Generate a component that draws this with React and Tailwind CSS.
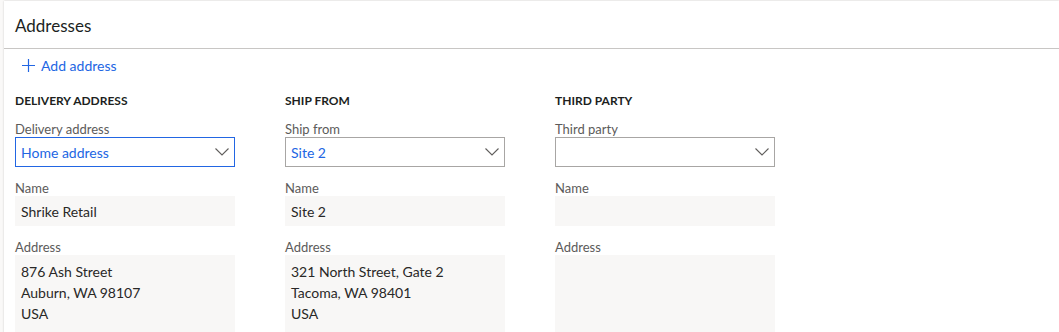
import React from 'react';

const Chevron = () => (
  <svg width="14" height="8" viewBox="0 0 14 8" fill="none" className="shrink-0">
    <path d="M0.5 0.5L7 7L13.5 0.5" stroke="#605e5c" strokeWidth="1.1" />
  </svg>
);

const Plus = () => (
  <svg width="13" height="13" viewBox="0 0 13 13" fill="none" className="shrink-0">
    <path d="M6.5 0V13M0 6.5H13" stroke="#2266e3" strokeWidth="1.2" />
  </svg>
);

const columns = [
  {
    heading: 'DELIVERY ADDRESS',
    selectLabel: 'Delivery address',
    selectValue: 'Home address',
    focused: true,
    name: 'Shrike Retail',
    address: ['876 Ash Street', 'Auburn, WA 98107', 'USA'],
  },
  {
    heading: 'SHIP FROM',
    selectLabel: 'Ship from',
    selectValue: 'Site 2',
    focused: false,
    name: 'Site 2',
    address: ['321 North Street, Gate 2', 'Tacoma, WA 98401', 'USA'],
  },
  {
    heading: 'THIRD PARTY',
    selectLabel: 'Third party',
    selectValue: '',
    focused: false,
    name: '',
    address: [],
  },
];

const Label = ({ children }) => (
  <div className="h-[16px] text-[13px] leading-[16px] text-[#5c5b5a]">{children}</div>
);

const AddressColumn = ({ col }) => (
  <div className="w-[270px] shrink-0">
    <div className="h-[16px] text-[12px] leading-[16px] font-bold text-[#201f1e]">{col.heading}</div>

    <div className="mt-[12px]">
      <Label>{col.selectLabel}</Label>
      <div
        className={`flex items-center justify-between w-[220px] h-[30px] pl-[5px] pr-[5px] bg-white border ${
          col.focused ? 'border-[#2266e3]' : 'border-[#a8a6a4]'
        }`}
      >
        <span className="text-[14px] text-[#2266e3]">{col.selectValue}</span>
        <Chevron />
      </div>
    </div>

    <div className="mt-[13px]">
      <Label>Name</Label>
      <div className="flex items-center w-[220px] h-[30px] px-[6px] bg-[#f8f7f6] text-[14px] text-[#292827]">
        {col.name}
      </div>
    </div>

    <div className="mt-[13px]">
      <Label>Address</Label>
      <div className="w-[220px] h-[84px] px-[6px] pt-[6px] bg-[#f8f7f6] text-[14px] leading-[21px] text-[#292827]">
        {col.address.map((line) => (
          <div key={line}>{line}</div>
        ))}
      </div>
    </div>
  </div>
);

export default function App() {
  return (
    <div
      className="w-[1059px] h-[332px] overflow-hidden bg-[#faf9f8] pl-[4px] pt-[1px]"
      style={{ fontFamily: 'Lato, "Liberation Sans", sans-serif' }}
    >
      <div className="h-[360px] bg-white shadow-[0_0_2px_rgba(0,0,0,0.18)]">
        {/* Header */}
        <div className="h-[48px] flex items-center pl-[11px] border-b border-[#c8c6c4]">
          <h1 className="text-[17px] text-[#201f1e] pt-[2px]">Addresses</h1>
        </div>

        {/* Toolbar */}
        <div className="h-[33px] flex items-center pl-[18px]">
          <button className="flex items-center gap-[6px] text-[14px] text-[#2266e3]">
            <Plus />
            Add address
          </button>
        </div>

        {/* Columns */}
        <div className="flex pl-[11px] pt-[11px]">
          {columns.map((col) => (
            <AddressColumn key={col.heading} col={col} />
          ))}
        </div>
      </div>
    </div>
  );
}
